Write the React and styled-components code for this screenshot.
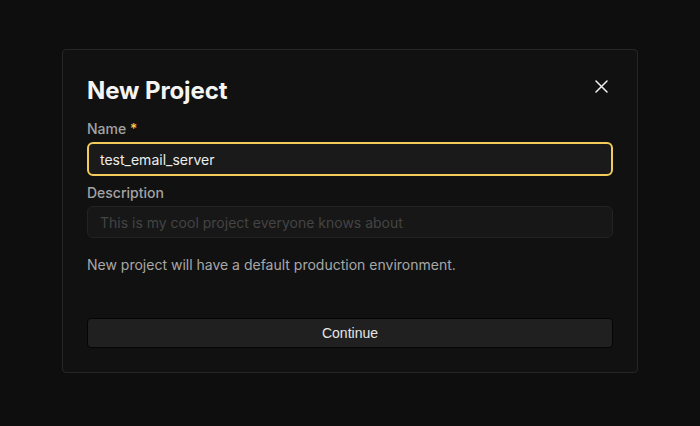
import styled, { createGlobalStyle } from "styled-components"

const Global = createGlobalStyle`
  html, body {
    margin: 0;
    padding: 0;
    background: #0e0e0e;
  }
  * {
    box-sizing: border-box;
  }
`

const Page = styled.div`
  min-height: 100vh;
  display: flex;
  align-items: center;
  justify-content: center;
  padding-bottom: 4px;
  font-family: Inter, "Noto Sans", sans-serif;
`

const Dialog = styled.div`
  position: relative;
  width: 576px;
  padding: 26px 24px 24px 24px;
  background: #111111;
  border: 1px solid #262626;
  border-radius: 4px;
  display: flex;
  flex-direction: column;
`

const Title = styled.h2`
  margin: 0;
  font-size: 24px;
  line-height: 30px;
  font-weight: 700;
  color: #f4f4f4;
  letter-spacing: -0.1px;
`

const Close = styled.button`
  position: absolute;
  top: 24px;
  right: 24px;
  width: 24px;
  height: 24px;
  padding: 0;
  border: none;
  background: transparent;
  display: flex;
  align-items: center;
  justify-content: center;
  color: #f0f0f0;
  cursor: pointer;
`

const Field = styled.div`
  display: flex;
  flex-direction: column;
  gap: 3px;
  margin-top: ${p => p.$top}px;
`

const Label = styled.label`
  font-size: 14px;
  line-height: 20px;
  color: #a3a3a3;
  font-weight: 500;
`

const Star = styled.span`
  color: #f2c94c;
`

const Input = styled.input`
  width: 100%;
  height: ${p => (p.$focus ? 34 : 32)}px;
  padding: 0 ${p => (p.$focus ? 11 : 12)}px;
  font-family: inherit;
  font-size: 14px;
  color: #ededed;
  background: ${p => (p.$focus ? "#1a1a1a" : "#171717")};
  border: ${p => (p.$focus ? "2px solid #f2cb5a" : "1px solid #232323")};
  border-radius: 6px;
  outline: none;

  &::placeholder {
    color: #444444;
  }
`

const Note = styled.p`
  margin: 17px 0 0;
  font-size: 14px;
  line-height: 20px;
  color: #a8a8a8;
`

const Button = styled.button`
  margin-top: 43px;
  width: 100%;
  height: 30px;
  font-family: "Liberation Sans", Arial, sans-serif;
  font-size: 14px;
  color: #e6e6e6;
  background: #202020;
  border: 1px solid #050505;
  border-radius: 4px;
  cursor: pointer;
`

export default function App() {
  return (
    <>
      <Global />
      <Page>
        <Dialog>
          <Title>New Project</Title>
          <Close aria-label="Close">
            <svg width="13" height="13" viewBox="0 0 13 13">
              <path d="M1 1L12 12M12 1L1 12" stroke="currentColor" strokeWidth="1.5" strokeLinecap="round" />
            </svg>
          </Close>
          <Field $top={13}>
            <Label>
              Name <Star>*</Star>
            </Label>
            <Input $focus defaultValue="test_email_server" />
          </Field>
          <Field $top={7}>
            <Label>Description</Label>
            <Input placeholder="This is my cool project everyone knows about" />
          </Field>
          <Note>New project will have a default production environment.</Note>
          <Button>Continue</Button>
        </Dialog>
      </Page>
    </>
  )
}
